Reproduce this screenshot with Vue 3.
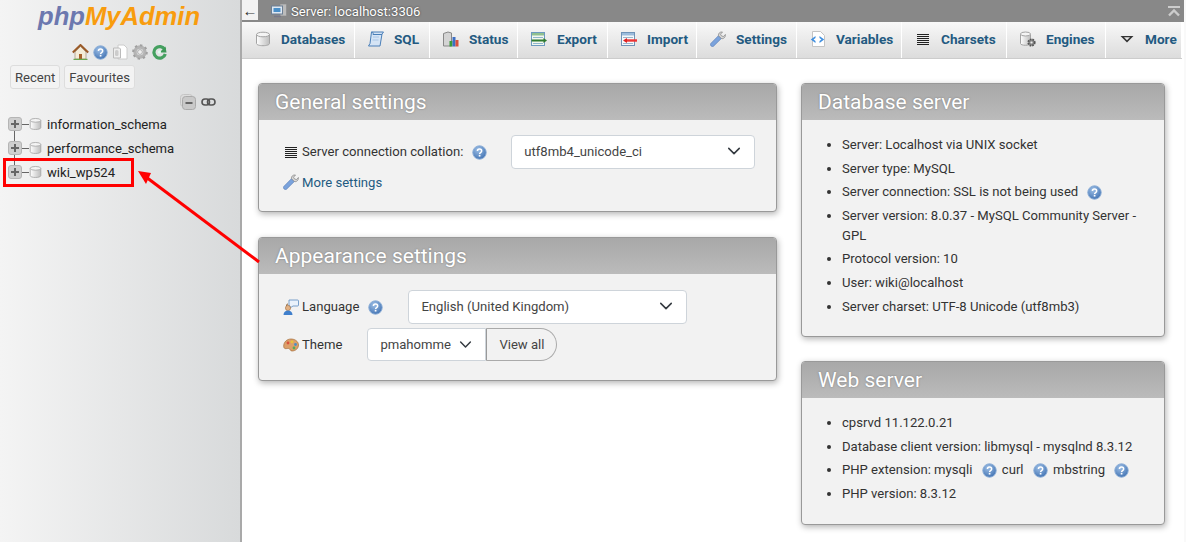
<script setup>
const tabs = [
  { label: 'Databases', icon: 'i-db', width: 113 },
  { label: 'SQL', icon: 'i-sql', width: 75 },
  { label: 'Status', icon: 'i-status', width: 88 },
  { label: 'Export', icon: 'i-export', width: 90 },
  { label: 'Import', icon: 'i-import', width: 89 },
  { label: 'Settings', icon: 'i-wrench', width: 100 },
  { label: 'Variables', icon: 'i-vars', width: 105 },
  { label: 'Charsets', icon: 'i-lines', width: 105 },
  { label: 'Engines', icon: 'i-engine', width: 99 },
  { label: 'More', icon: 'i-more', width: 76 },
]
const databases = ['information_schema', 'performance_schema', 'wiki_wp524']
</script>

<template>
  <div class="page">
    <svg class="sprite" aria-hidden="true">
      <defs>
        <linearGradient id="g-db" x1="0" x2="1" y1="0" y2="0">
          <stop offset="0" stop-color="#fff" />
          <stop offset="1" stop-color="#bdbdbd" />
        </linearGradient>
        <radialGradient id="g-help" cx="0.4" cy="0.3" r="0.8">
          <stop offset="0" stop-color="#9dbfe6" />
          <stop offset="1" stop-color="#3a6cae" />
        </radialGradient>
        <symbol id="i-db" viewBox="0 0 16 16">
          <path d="M1.500 3.500v9c0 1.300 2.900 2.200 6.500 2.200s6.500-.9 6.500-2.200v-9z" fill="url(#g-db)" stroke="#a3a3a3" />
          <ellipse cx="8" cy="3.500" rx="6.500" ry="2.300" fill="#f4f4f4" stroke="#a3a3a3" />
        </symbol>
        <symbol id="i-help" viewBox="0 0 16 16">
          <circle cx="8" cy="8" r="7.200" fill="url(#g-help)" stroke="#8fb0d8" />
          <path d="M5.800 6.400c0-2.700 4.500-2.700 4.500 0 0 1.700-2.200 1.600-2.200 3.100" fill="none" stroke="#fff" stroke-width="1.600" />
          <rect x="7.200" y="10.500" width="1.800" height="1.800" fill="#fff" />
        </symbol>
        <symbol id="i-sql" viewBox="0 0 16 16">
          <path d="M3.500 1h12l-1.500 2-2 12H.5l1.500-2.500z" fill="#d5e4f5" stroke="#4a7fb8" />
          <path d="M3.500 1c1.700 0 2 1.500 1.500 2.500h9" fill="none" stroke="#4a7fb8" />
          <path d="M5 6h6M4.500 9h6" stroke="#a9c6e6" />
        </symbol>
        <symbol id="i-status" viewBox="0 0 16 16">
          <path d="M.5 2.500l4.500-1.500 3.500 1v13h-8z" fill="#d4d4d4" stroke="#888" />
          <rect x="6.500" y="10" width="3" height="5.500" fill="#3a9a3a" />
          <rect x="9.500" y="6" width="3" height="9.500" fill="#3d6fc4" />
          <rect x="12.500" y="9" width="3" height="6.500" fill="#d8503c" />
        </symbol>
        <symbol id="i-export" viewBox="0 0 16 16">
          <rect x=".5" y="1.500" width="13" height="13" fill="#f2f7f0" stroke="#6c9ac0" />
          <rect x="1" y="2" width="12" height="2.500" fill="#8fc08f" />
          <path d="M2 6.500h10M2 12.500h10" stroke="#8fb6cc" />
          <path d="M.5 9.500h12.500" stroke="#2f7a2f" stroke-width="2" />
          <path d="M12.500 7l3.500 2.500-3.500 2.500z" fill="#2f7a2f" />
        </symbol>
        <symbol id="i-import" viewBox="0 0 16 16">
          <rect x=".5" y="1.500" width="13" height="13" fill="#f5f8fb" stroke="#6f93b8" />
          <rect x="1" y="2" width="12" height="2.500" fill="#9bbcdc" />
          <path d="M2 6.500h10M2 12.500h10" stroke="#9ab6cc" />
          <path d="M5 9.500h11" stroke="#e33" stroke-width="2.400" />
          <path d="M6 7l-4 2.500 4 2.500z" fill="#d22" />
        </symbol>
        <symbol id="i-wrench" viewBox="0 0 16 16">
          <path d="M.8 12.500l7.700-7.800 2.800 2.800-7.800 7.700c-1.700 1.200-3.900-1-2.700-2.700z" fill="#7ba3dc" stroke="#5a80b8" stroke-width=".7" />
          <path d="M8.500 4.700C8 2.500 10 .5 12.500 1l-2 2.200 1 1.800 2 .5 1.900-2c.4 2.500-1.900 4.800-4.100 4z" fill="#d9d9d9" stroke="#808080" stroke-width=".7" />
        </symbol>
        <symbol id="i-vars" viewBox="0 0 16 16">
          <path d="M2.500 .5h8l4 4v11h-12z" fill="#fff" stroke="#c4c4c4" />
          <path d="M5.500 5L.8 8.500l4.700 3.500V10L3.500 8.500 5.500 7zM9.500 5l4.700 3.500L9.500 12V10l2-1.500-2-1.500z" fill="#3f8fe0" />
        </symbol>
        <symbol id="i-lines" viewBox="0 0 16 16">
          <path d="M2 3.500h12M2 5.500h12M2 7.500h12M2 9.500h12M2 11.500h12M2 13.500h12" stroke="#222" stroke-width="1" />
        </symbol>
        <symbol id="i-engine" viewBox="0 0 16 16">
          <path d="M.5 3v9.500c0 1 2.200 1.800 5 1.800s5-.8 5-1.800V3z" fill="url(#g-db)" stroke="#a3a3a3" />
          <ellipse cx="5.500" cy="3" rx="5" ry="2" fill="#f4f4f4" stroke="#a3a3a3" />
          <circle cx="11.500" cy="11.500" r="3.200" fill="#8a8a8a" stroke="#555" stroke-width="1.800" stroke-dasharray="1.600 1" />
          <circle cx="11.500" cy="11.500" r="1.100" fill="#eee" />
        </symbol>
        <symbol id="i-more" viewBox="0 0 16 16">
          <path d="M1.500 5h13l-6.500 6.500z" fill="#333" />
          <path d="M5 6.200h6l-3 3z" fill="#e8e8e8" />
        </symbol>
        <symbol id="i-chevron" viewBox="0 0 16 16">
          <path d="M2 5l6 6 6-6" fill="none" stroke="#343a40" stroke-width="1.800" stroke-linecap="round" stroke-linejoin="round" />
        </symbol>
      </defs>
    </svg>

    <aside class="sidebar">
      <div class="logo"><span class="logo-php">php</span><span class="logo-my">MyAdmin</span></div>
      <div class="nav-icons">
        <svg width="17" height="16" viewBox="0 0 17 16">
          <path d="M3 8v7h11V8L8.500 2.500z" fill="#f4ecd8" stroke="#a98" stroke-width=".8" />
          <path d="M.8 8.500L8.500 1l7.700 7.500" fill="none" stroke="#9a5a28" stroke-width="2" />
          <rect x="7" y="10" width="3" height="5" fill="#a8622c" />
          <path d="M1.500 15.500h14" stroke="#6aa84f" stroke-width="1.400" />
        </svg>
        <svg width="15" height="15"><use href="#i-help" /></svg>
        <svg width="16" height="16" viewBox="0 0 16 16">
          <path d="M6 1h6l3 3v11H6z" fill="#fff" stroke="#ccc" />
          <path d="M1.500 4h6l1 1v9h-7z" fill="#eee" stroke="#bbb" />
          <rect x="3" y="6" width="3.500" height="6" rx="1.500" fill="#ccc" />
        </svg>
        <svg width="16" height="16" viewBox="0 0 16 16">
          <circle cx="8" cy="8" r="5" fill="none" stroke="#b4b4b4" stroke-width="3.400" />
          <circle cx="8" cy="8" r="6.800" fill="none" stroke="#a0a0a0" stroke-width="2" stroke-dasharray="2.400 2.900" />
          <circle cx="8" cy="8" r="2.400" fill="#eee" stroke="#999" stroke-width=".7" />
        </svg>
        <svg width="15" height="16" viewBox="0 0 15 16">
          <path d="M12.800 5.500A5.800 5.800 0 1 0 13.300 10" fill="none" stroke="#45a060" stroke-width="3.200" />
          <path d="M7.500 8.500h7l-1-6z" fill="#3f9a58" />
          <circle cx="7.500" cy="8" r="1.600" fill="#dfe" />
        </svg>
      </div>
      <div class="side-tabs">
        <button class="side-tab">Recent</button>
        <button class="side-tab">Favourites</button>
      </div>
      <div class="tree-tools">
        <svg width="16" height="16" viewBox="0 0 16 16">
          <rect x=".5" y=".5" width="12" height="12" rx="3" fill="#ddd" stroke="#c4c4c4" />
          <rect x="2.500" y="2.500" width="13" height="13" rx="3" fill="#c9c9c9" stroke="#aaa" />
          <rect x="5.500" y="8" width="7" height="2" fill="#666" />
        </svg>
        <svg width="15" height="10" viewBox="0 0 15 10">
          <rect x="1" y="2" width="7.500" height="6" rx="3" fill="none" stroke="#555" stroke-width="1.600" />
          <rect x="6.500" y="2" width="7.500" height="6" rx="3" fill="none" stroke="#555" stroke-width="1.600" />
        </svg>
      </div>
      <ul class="tree">
        <li v-for="db in databases" :key="db" class="tree-row">
          <span class="expander"></span>
          <span class="connector"></span>
          <svg class="db-icon" width="13" height="14"><use href="#i-db" /></svg>
          <span class="db-name">{{ db }}</span>
        </li>
      </ul>
    </aside>

    <main class="main">
      <div class="topbar">
        <span class="back">&#8592;</span>
        <svg class="server-icon" width="16" height="14" viewBox="0 0 16 14">
          <rect x="9" y="0" width="6.500" height="12" fill="#bbb" stroke="#888" stroke-width=".6" />
          <rect x=".5" y="2" width="11" height="8" fill="#dfe8f2" stroke="#6c7f94" />
          <rect x="2.500" y="4" width="7" height="4" fill="#4a8fc8" />
          <path d="M3 12.500h7" stroke="#778" stroke-width="1.400" />
        </svg>
        <span class="server-label">Server: localhost:3306</span>
        <svg class="collapse" width="12" height="11" viewBox="0 0 12 11">
          <path d="M0 1h12" stroke="#ccc" stroke-width="2" />
          <path d="M1 9.500l5-5 5 5" fill="none" stroke="#ccc" stroke-width="2.400" />
        </svg>
      </div>
      <nav class="tabs">
        <a v-for="tab in tabs" :key="tab.label" class="tab" :style="{ width: tab.width + 'px' }">
          <svg class="tab-icon" width="16" height="16"><use :href="'#' + tab.icon" /></svg>
          {{ tab.label }}
        </a>
      </nav>

      <div class="content">
        <div class="col col-left">
          <section class="panel">
            <h2 class="panel-title">General settings</h2>
            <div class="form-body">
              <div class="form-row">
                <svg class="row-icon" width="16" height="16"><use href="#i-lines" /></svg>
                <span class="form-label">Server connection collation:</span>
                <svg class="help" width="15" height="15"><use href="#i-help" /></svg>
                <div class="select select-collation">utf8mb4_unicode_ci<svg width="14" height="14"><use href="#i-chevron" /></svg></div>
              </div>
              <div class="form-row link-row">
                <svg class="row-icon" width="16" height="16"><use href="#i-wrench" /></svg>
                <a class="more-link">More settings</a>
              </div>
            </div>
          </section>

          <section class="panel">
            <h2 class="panel-title">Appearance settings</h2>
            <div class="form-body form-body-appearance">
              <div class="form-row">
                <svg class="row-icon" width="16" height="16" viewBox="0 0 16 16">
                  <path d="M6 1h8.500a1 1 0 0 1 1 1v4a1 1 0 0 1-1 1H10l-3 2V7H6z" fill="#eaf2fb" stroke="#5b8bc0" stroke-width=".8" />
                  <circle cx="5" cy="9" r="2.600" fill="#e2b184" stroke="#a4703f" stroke-width=".6" />
                  <path d="M4 7c-1-.5-.5-2 1-2" fill="none" stroke="#8a5a2b" />
                  <path d="M.5 16c0-3 2-4.500 4.500-4.500s4.500 1.500 4.500 4.500z" fill="#3f7fcc" />
                </svg>
                <span class="form-label">Language</span>
                <svg class="help" width="15" height="15"><use href="#i-help" /></svg>
                <div class="select select-lang">English (United Kingdom)<svg width="14" height="14"><use href="#i-chevron" /></svg></div>
              </div>
              <div class="form-row theme-row">
                <svg class="row-icon" width="16" height="16" viewBox="0 0 16 16">
                  <path d="M8 2c4 0 7.500 2.500 7.500 6s-3 6-6.500 6c-2 0-1.500-2-3-2.500S1 13 .7 9.500C.5 5 4 2 8 2z" fill="#dca06a" stroke="#a56e3b" stroke-width=".7" />
                  <circle cx="5" cy="6" r="1.400" fill="#d8503c" />
                  <circle cx="9" cy="4.800" r="1.400" fill="#e9c33c" />
                  <circle cx="12.500" cy="7.500" r="1.400" fill="#4a8fc8" />
                  <circle cx="11" cy="11" r="1.400" fill="#5aa85a" />
                </svg>
                <span class="form-label">Theme</span>
                <div class="select select-theme">pmahomme<svg width="13" height="13"><use href="#i-chevron" /></svg></div>
                <button class="view-all">View all</button>
              </div>
            </div>
          </section>
        </div>

        <div class="col col-right">
          <section class="panel">
            <h2 class="panel-title">Database server</h2>
            <ul class="info">
              <li>Server: Localhost via UNIX socket</li>
              <li>Server type: MySQL</li>
              <li>Server connection: SSL is not being used <svg class="help-inline" width="15" height="15"><use href="#i-help" /></svg></li>
              <li>Server version: 8.0.37 - MySQL Community Server - GPL</li>
              <li>Protocol version: 10</li>
              <li>User: wiki@localhost</li>
              <li>Server charset: UTF-8 Unicode (utf8mb3)</li>
            </ul>
          </section>

          <section class="panel">
            <h2 class="panel-title">Web server</h2>
            <ul class="info">
              <li>cpsrvd 11.122.0.21</li>
              <li>Database client version: libmysql - mysqlnd 8.3.12</li>
              <li>PHP extension: mysqli <svg class="help-inline" width="15" height="15"><use href="#i-help" /></svg> curl <svg class="help-inline" width="15" height="15"><use href="#i-help" /></svg> mbstring <svg class="help-inline" width="15" height="15"><use href="#i-help" /></svg></li>
              <li>PHP version: 8.3.12</li>
            </ul>
          </section>
        </div>
      </div>
    </main>

    <!-- annotation drawn over the screenshot -->
    <div class="highlight"></div>
    <svg class="arrow" width="270" height="270" viewBox="0 0 270 270">
      <path d="M259 262L146 177" stroke="#f00" stroke-width="3" />
      <path d="M138 171l13 2-5 11z" fill="#f00" />
    </svg>
  </div>
</template>

<style scoped>
.page {
  position: relative;
  display: flex;
  width: 1186px;
  height: 542px;
  overflow: hidden;
  background: #f9f9f9;
  color: #333;
  font-family: Roboto, "Liberation Sans", sans-serif;
  font-size: 13.1px;
}

.sprite {
  position: absolute;
  width: 0;
  height: 0;
}

.sidebar {
  flex: 0 0 242px;
  box-sizing: border-box;
  border-right: 2px solid #a9a9a9;
  background: linear-gradient(to right, #f4f4f4, #d8dadb);
}

.logo {
  height: 44px;
  padding: 0 0 0 38px;
  font-family: "Liberation Sans", sans-serif;
  font-size: 25.6px;
  font-style: italic;
  font-weight: 700;
  line-height: 32px;
}

.logo-php {
  color: #6c78af;
}

.logo-my {
  color: #f89c0e;
}

.nav-icons {
  display: flex;
  align-items: center;
  gap: 4px;
  height: 16px;
  margin-left: 72px;
}

.side-tabs {
  display: flex;
  gap: 4px;
  margin: 5px 0 0 10px;
}

.side-tab {
  height: 24px;
  padding: 0 4px;
  border: 1px solid #ddd;
  border-radius: 3px;
  background: #f3f3f3;
  color: #444;
  font: inherit;
}

.tree-tools {
  display: flex;
  align-items: center;
  gap: 5px;
  height: 16px;
  margin: 5px 0 0 180px;
}

.tree {
  position: relative;
  margin: 2px 0 0;
  padding: 0 0 0 8px;
  list-style: none;
}

.tree::before {
  content: "";
  position: absolute;
  top: 12px;
  left: 14px;
  width: 1px;
  height: 48px;
  background: #666;
}

.tree-row {
  display: flex;
  align-items: center;
  height: 24px;
}

.expander {
  position: relative;
  z-index: 1;
  box-sizing: border-box;
  width: 14px;
  height: 14px;
  border: 1px solid #b5b5b5;
  border-radius: 3px;
  background:
    linear-gradient(#666, #666) center / 8px 2px no-repeat,
    linear-gradient(#666, #666) center / 2px 8px no-repeat,
    #cfcfcf;
}

.connector {
  width: 7px;
  height: 1px;
  background: #666;
}

.db-name {
  margin-left: 5px;
  color: #222;
}

.main {
  flex: 0 0 942px;
  min-width: 0;
  background: #fff;
}

.topbar {
  display: flex;
  align-items: center;
  height: 22px;
  background: #888;
}

.back {
  flex: none;
  align-self: flex-start;
  width: 16px;
  height: 20px;
  background: #f2f2f2;
  color: #333;
  font-family: "Liberation Sans", sans-serif;
  font-size: 15px;
  line-height: 21px;
  text-align: center;
}

.server-icon {
  margin-left: 13px;
}

.server-label {
  margin-left: 4px;
  color: #fff;
  text-shadow: 0 0 2px #333;
}

.collapse {
  margin-left: auto;
  margin-right: 4px;
}

.tabs {
  display: flex;
  box-sizing: border-box;
  width: 940px;
  height: 37px;
  border-bottom: 1px solid #ccc;
  background: linear-gradient(#f8f8f8, #dcdcdc);
}

.tab {
  display: flex;
  flex: none;
  align-items: center;
  box-sizing: border-box;
  padding: 0 0 2px 13px;
  border-right: 1px solid #fff;
  color: #235a81;
  font-size: 13.6px;
  font-weight: 700;
  white-space: nowrap;
}

.tab-icon {
  flex: none;
  margin-right: 10px;
}

.content {
  display: flex;
  gap: 24px;
  padding: 24px 0 0 16px;
}

.col {
  display: flex;
  flex-direction: column;
  gap: 25px;
}

.col-left {
  width: 519px;
}

.col-right {
  width: 364px;
  gap: 24px;
}

.panel {
  border: 1px solid #999;
  border-radius: 4px;
  background: #f2f2f2;
  box-shadow: 1px 2px 6px rgba(0, 0, 0, 0.3);
}

.panel-title {
  height: 36px;
  margin: 0;
  padding-left: 16px;
  border-radius: 3px 3px 0 0;
  background: linear-gradient(#a8a8a8, #bbb);
  color: #fff;
  font-size: 21px;
  font-weight: 400;
  line-height: 36px;
  text-shadow: 0 0 2px #777;
}

.form-body {
  padding: 15px 0 16px 24px;
}

.form-body-appearance {
  padding: 16px 0 19px 24px;
}

.form-row {
  display: flex;
  align-items: center;
  min-height: 34px;
}

.form-row:first-child .form-label,
.form-row:first-child .select {
  padding-bottom: 2px;
}

.link-row {
  min-height: 26px;
}

.theme-row {
  min-height: 33px;
  margin-top: 4px;
}

.row-icon {
  flex: none;
  margin-right: 3px;
}

.form-label {
  white-space: nowrap;
}

.help {
  flex: none;
  margin-left: 9px;
}

.more-link {
  color: #235a81;
}

.select {
  display: flex;
  align-items: center;
  justify-content: space-between;
  box-sizing: border-box;
  height: 34px;
  padding: 0 13px 0 12px;
  border: 1px solid #ced4da;
  border-radius: 4px;
  background: #fff;
  color: #444;
}

.select-collation {
  width: 244px;
  margin-left: 24px;
}

.select-lang {
  width: 279px;
  margin-left: 25px;
}

.select-theme {
  width: 119px;
  height: 33px;
  margin-left: 25px;
  border-radius: 4px 0 0 4px;
}

.view-all {
  box-sizing: border-box;
  width: 71px;
  height: 33px;
  border: 1px solid #aaa;
  border-left-color: #999;
  border-radius: 0 17px 17px 0;
  background: #f2f2f2;
  color: #444;
  font: inherit;
}

.info {
  margin: 0;
  padding: 15px 16px 16px 40px;
  line-height: 20px;
}

.info li {
  margin-bottom: 3.6px;
}

.help-inline {
  margin: 0 2px 0 6px;
  vertical-align: -4px;
}

.highlight {
  position: absolute;
  top: 158px;
  left: 3px;
  box-sizing: border-box;
  width: 131px;
  height: 29px;
  border: 3px solid #f00;
}

.arrow {
  position: absolute;
  top: 0;
  left: 0;
  pointer-events: none;
}
</style>
